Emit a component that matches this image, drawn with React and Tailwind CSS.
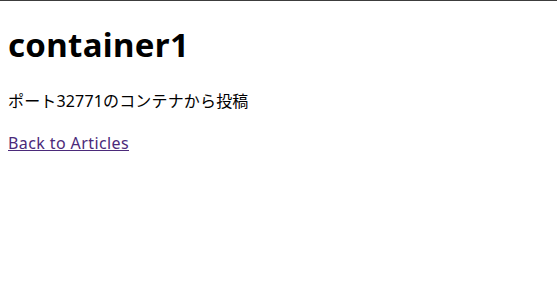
export default function App() {
  return (
    <div className="min-h-[290px] border-t border-[#3c3c3c] bg-white px-2 text-black" style={{ fontFamily: '"Noto Sans", "Noto Sans CJK JP", sans-serif' }}>
      <h1 className="m-0 pt-[20px] text-[33px] font-bold leading-[48px] tracking-[0.01em]">container1</h1>
      <p className="mt-[20px] text-[16px] leading-[24px] tracking-[0.01em]">ポート32771のコンテナから投稿</p>
      <p className="mt-[18px] text-[16px] leading-[24px] tracking-[0.025em]">
        <a href="#" className="text-[#4b2a7a] underline">Back to Articles</a>
      </p>
    </div>
  );
}
